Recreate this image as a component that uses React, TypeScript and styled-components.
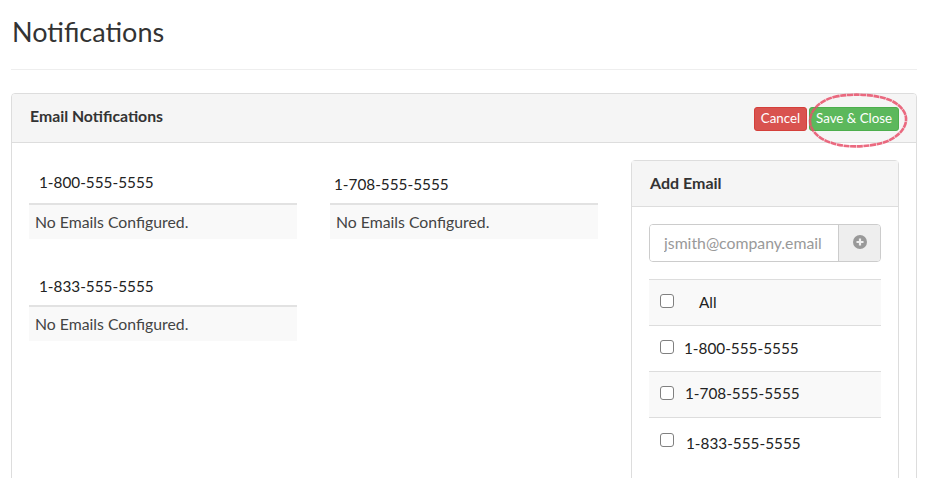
import styled, { createGlobalStyle } from "styled-components";

const GlobalStyle = createGlobalStyle`
  html, body {
    margin: 0;
    height: 100%;
    overflow: hidden;
    background: #fff;
  }
  body {
    font-family: Lato, "Open Sans", sans-serif;
    color: #333;
  }
  * { box-sizing: border-box; }
`;

const Page = styled.div`
  padding: 0 14px 0 11px;
  height: 478px;
  overflow: hidden;
`;

const Heading = styled.h1`
  margin: 0;
  padding: 14px 0 0 1px;
  height: 70px;
  font-size: 27px;
  line-height: 36px;
  font-weight: 400;
  color: #333;
  border-bottom: 1px solid #eee;
`;

const Panel = styled.section`
  margin-top: 23px;
  height: 500px;
  border: 1px solid #ddd;
  border-radius: 4px;
  background: #fff;
`;

const PanelHeader = styled.header`
  height: 49px;
  padding: 0 17px 0 18px;
  display: flex;
  align-items: center;
  justify-content: space-between;
  background: #f5f5f5;
  border-bottom: 1px solid #ddd;
  border-radius: 3px 3px 0 0;
`;

const PanelTitle = styled.h2`
  margin: 0 0 5px;
  font-size: 15.8px;
  font-weight: 700;
  color: #333;
`;

const Actions = styled.div`
  position: relative;
  display: flex;
  gap: 2px;
  margin-top: 2px;
`;

const Button = styled.button<{ $tone: "red" | "green" }>`
  height: 24px;
  padding: 0 6px;
  border: 1px solid ${({ $tone }) => ($tone === "red" ? "#d43f3a" : "#4cae4c")};
  border-radius: 3px;
  background: ${({ $tone }) => ($tone === "red" ? "#d9534f" : "#5cb85c")};
  color: #fff;
  font: 400 13.3px/1 Lato, sans-serif;
`;

const Scribble = styled.svg`
  position: absolute;
  left: 53px;
  top: -14px;
  pointer-events: none;
`;

const Body = styled.div`
  display: grid;
  grid-template-columns: 268px 268px 268px;
  column-gap: 33px;
  padding: 17px 0 0 17px;
  align-items: start;
`;

const NumberColumn = styled.div`
  display: flex;
  flex-direction: column;
  gap: 25px;
`;

const NumberLabel = styled.div<{ $inset?: number; $top?: number; $height?: number }>`
  height: ${({ $height }) => $height ?? 45}px;
  padding: ${({ $top }) => $top ?? 13}px 0 0 ${({ $inset }) => $inset ?? 10}px;
  font-size: 15.3px;
  line-height: 18px;
  color: #222;
  border-bottom: 2px solid #e2e2e2;
`;

const EmptyRow = styled.div`
  height: 34px;
  padding: 0 6px 2px;
  display: flex;
  align-items: center;
  background: #f9f9f9;
  font-size: 15.8px;
  color: #444;
`;

const Aside = styled.aside`
  border: 1px solid #ddd;
  border-radius: 4px;
  height: 400px;
`;

const AsideHeader = styled.header`
  height: 46px;
  padding: 0 18px 3px;
  display: flex;
  align-items: center;
  background: #f5f5f5;
  border-bottom: 1px solid #ddd;
  font-size: 16px;
  font-weight: 700;
  color: #333;
`;

const AsideBody = styled.div`
  padding: 17px 17px 0;
`;

const InputGroup = styled.div`
  display: flex;
  height: 38px;
  border: 1px solid #ccc;
  border-radius: 4px;
  overflow: hidden;
`;

const EmailInput = styled.input`
  flex: 1;
  min-width: 0;
  border: 0;
  outline: 0;
  padding: 0 0 2px 14px;
  font: 400 15.8px Lato, sans-serif;
  color: #333;

  &::placeholder {
    color: #999;
    opacity: 1;
  }
`;

const AddButton = styled.span`
  width: 42px;
  display: flex;
  align-items: center;
  justify-content: center;
  background: #eee;
  border-left: 1px solid #ccc;
  padding-bottom: 2px;
`;

const PhoneList = styled.ul`
  list-style: none;
  margin: 17px 0 0;
  padding: 0;
  border-top: 1px solid #ddd;
`;

const PhoneRow = styled.li<{ $striped?: boolean; $indent: number; $drop: number }>`
  height: 46px;
  display: flex;
  align-items: center;
  gap: ${({ $indent }) => $indent}px;
  padding-left: 11px;
  font-size: 15.3px;
  color: #222;
  background: ${({ $striped }) => ($striped ? "#f9f9f9" : "#fff")};
  border-bottom: 1px solid #ddd;

  &:last-child {
    border-bottom: 0;
  }

  span {
    position: relative;
    top: ${({ $drop }) => $drop}px;
  }
`;

const Box = styled.input.attrs({ type: "checkbox" })`
  appearance: none;
  width: 14px;
  height: 14px;
  margin: 0 0 3px;
  border: 1px solid #808080;
  border-radius: 3px;
  background: #fff;
`;

const App = () => (
  <Page>
    <GlobalStyle />
    <Heading>Notifications</Heading>
    <Panel>
      <PanelHeader>
        <PanelTitle>Email Notifications</PanelTitle>
        <Actions>
          <Button $tone="red">Cancel</Button>
          <Button $tone="green">Save &amp; Close</Button>
          <Scribble width="102" height="58" viewBox="0 0 102 58" fill="none">
            <path
              d="M27 4C44 0 70 1 85 8c10 5 15 13 14 20-1 9-10 18-24 22-15 4-36 5-50 0C11 46 3 37 3 28 3 18 12 8 27 4Z"
              stroke="#e8506a"
              strokeWidth="2.6"
              strokeDasharray="6 0.6"
              opacity="0.85"
            />
          </Scribble>
        </Actions>
      </PanelHeader>
      <Body>
        <NumberColumn>
          <div>
            <NumberLabel>1-800-555-5555</NumberLabel>
            <EmptyRow>No Emails Configured.</EmptyRow>
          </div>
          <div>
            <NumberLabel $height={43}>1-833-555-5555</NumberLabel>
            <EmptyRow>No Emails Configured.</EmptyRow>
          </div>
        </NumberColumn>
        <NumberColumn>
          <div>
            <NumberLabel $inset={4} $top={15}>1-708-555-5555</NumberLabel>
            <EmptyRow>No Emails Configured.</EmptyRow>
          </div>
        </NumberColumn>
        <Aside>
          <AsideHeader>Add Email</AsideHeader>
          <AsideBody>
            <InputGroup>
              <EmailInput placeholder="jsmith@company.email" />
              <AddButton>
                <svg width="14" height="14" viewBox="0 0 14 14">
                  <circle cx="7" cy="7" r="7" fill="#999" />
                  <path d="M7 3.5v7M3.5 7h7" stroke="#eee" strokeWidth="2.2" />
                </svg>
              </AddButton>
            </InputGroup>
            <PhoneList>
              <PhoneRow $striped $indent={25} $drop={-1}>
                <Box />
                <span>All</span>
              </PhoneRow>
              <PhoneRow $indent={10} $drop={-1}>
                <Box />
                <span>1-800-555-5555</span>
              </PhoneRow>
              <PhoneRow $striped $indent={11} $drop={-2}>
                <Box />
                <span>1-708-555-5555</span>
              </PhoneRow>
              <PhoneRow $indent={12} $drop={2}>
                <Box />
                <span>1-833-555-5555</span>
              </PhoneRow>
            </PhoneList>
          </AsideBody>
        </Aside>
      </Body>
    </Panel>
  </Page>
);

export default App;
